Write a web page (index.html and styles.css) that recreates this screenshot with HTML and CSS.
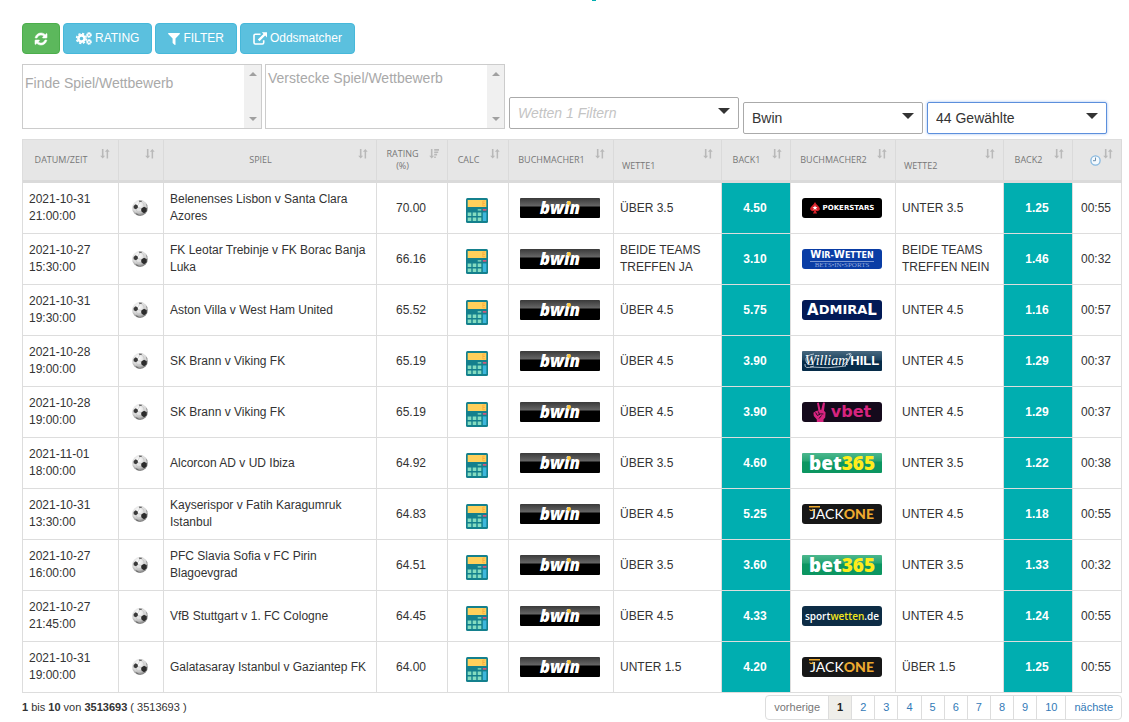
FILE: index.html
```html
<!DOCTYPE html>
<html lang="de">
<head>
<meta charset="utf-8">
<meta name="viewport" content="width=device-width, initial-scale=1">
<title>Oddsmatcher</title>
<link rel="stylesheet" href="styles.css">
</head>
<body>
<svg class="defs" aria-hidden="true">
  <defs>
    <radialGradient id="ballshade" cx="0.4" cy="0.3" r="0.75">
      <stop offset="0" stop-color="#ffffff"/><stop offset="0.6" stop-color="#d6d6d6"/><stop offset="1" stop-color="#6c6c6c"/>
    </radialGradient>
    <symbol id="ball" viewBox="0 0 16 16">
      <circle cx="8" cy="8" r="7.9" fill="url(#ballshade)"/>
      <path d="M1.600 6l2-1.800 2.200 1.200.1 2.300-2 1.500-2.200-1z" fill="#3a3a3a"/>
      <path d="M9.200 8.400l2.900-1.700 2.700 1.500-.1 3-2.600 2-2.800-1.700z" fill="#2c2c2c"/>
      <path d="M6.800.5l3.600.3-1 1.200-2 .1zM3.300 13l2.600.9 1.400 1.600-2.600-.8zM14.200 3.600l1.200 2.200-.8-.2z" fill="#6a6a6a"/>
      <path d="M5.900 7.600l3.700 1M5.800 5.600l2-3.500M12.200 7l-.6-3.400-2.200-1.600M4 9.100l1.400 3 4.100-.7" fill="none" stroke="#b5b5b5" stroke-width=".5"/>
    </symbol>
    <symbol id="calc" viewBox="0 0 22 25">
      <rect width="22" height="25" rx="1.500" fill="#14808d"/>
      <rect x="1.700" y="2" width="18.600" height="7" fill="#ffd05b"/>
      <path d="M19.200 3h-2.400v2.200h1.800M18.800 5.500h-2v2.300h2.400" fill="none" stroke="#f9ab3e" stroke-width=".8"/>
      <path d="M11.700 11h3.600v1.700h-3.600z" fill="#6fc7b3"/>
      <path d="M16.800 11h3.600v1.700h-3.600z" fill="#d4577e"/>
      <path d="M16.800 14.400h3.600v8.600h-3.600z" fill="#3db7dc"/>
      <path d="M1.700 14.400h3.600v3.600H1.700zM6.700 14.400h3.600v3.600H6.700zM11.700 14.400h3.600v3.600h-3.600zM1.700 19.400h3.600V23H1.700zM6.700 19.400h3.600V23H6.700zM11.700 19.400h3.600V23h-3.600z" fill="#84dcc0"/>
    </symbol>
    <symbol id="sort" viewBox="0 0 10 10">
      <path d="M1.900 0h1.600v6.800h1.600L2.700 9.600.2 6.800h1.700zM6.600 9.600h1.500V2.800h1.600L7.300 0 4.900 2.800h1.700z"/>
    </symbol>
    <symbol id="sorted" viewBox="0 0 10 10">
      <path d="M1.900 0h1.600v6.800h1.600L2.700 9.600.2 6.800h1.700zM5.200 0h4.800v1.700H5.200zM5.200 2.400h4v1.700h-4zM5.200 4.800h2.900v1.600H5.200zM5.200 7.400h1.600V9H5.200z"/>
    </symbol>
  </defs>
</svg>

<main class="page">
  <div class="mark" aria-hidden="true"></div>
  <div class="actions">
    <button type="button" class="btn btn-refresh" aria-label="Aktualisieren">
      <svg class="icon" viewBox="0 0 1536 1536" aria-hidden="true"><path fill="currentColor" stroke="currentColor" stroke-width="70" d="M1511 928q0 5-1 7-64 268-268 434.500T764 1536q-146 0-282.500-55T238 1324l-129 129q-19 19-45 19t-45-19-19-45V960q0-26 19-45t45-19h448q26 0 45 19t19 45-19 45l-137 137q71 66 161 102t187 36q134 0 250-65t186-179q11-17 53-117 8-23 30-23h192q13 0 22.500 9.500t9.500 22.500zm25-800v448q0 26-19 45t-45 19h-448q-26 0-45-19t-19-45 19-45l138-138Q969 256 768 256q-134 0-250 65T332 500q-11 17-53 117-8 23-30 23H50q-13 0-22.500-9.500T18 608v-7q65-268 270-434.500T768 0q146 0 284 55.500T1297 212l130-129q19-19 45-19t45 19 19 45z"/></svg>
    </button>
    <button type="button" class="btn">
      <svg class="icon icon-wide" viewBox="0 0 16 13" aria-hidden="true"><g fill="none" stroke="currentColor"><circle cx="5.500" cy="6.500" r="3.100" stroke-width="2.600"/><circle cx="5.500" cy="6.500" r="4.900" stroke-width="1.600" stroke-dasharray="2.200 1.650"/><circle cx="13" cy="3" r="1.500" stroke-width="1.300"/><circle cx="13" cy="3" r="2.500" stroke-width="1" stroke-dasharray="1.300 .66"/><circle cx="13" cy="10" r="1.500" stroke-width="1.300"/><circle cx="13" cy="10" r="2.500" stroke-width="1" stroke-dasharray="1.300 .66"/></g></svg>
      RATING
    </button>
    <button type="button" class="btn">
      <svg class="icon" viewBox="0 0 12 12" aria-hidden="true"><path fill="currentColor" d="M.6 0h10.800q.9.200.4 1L7.500 5.400v6q-.2.800-1 .4L4.600 9.900V5.400L.2 1Q-.2.200.6 0z"/></svg>
      FILTER
    </button>
    <button type="button" class="btn">
      <svg class="icon icon-mid" viewBox="0 0 14 13" aria-hidden="true"><path fill="none" stroke="currentColor" stroke-width="1.600" d="M7.500 2.300H2.300Q1 2.300 1 3.600v7Q1 12 2.300 12h7q1.400 0 1.400-1.400V8.200"/><path fill="currentColor" d="M8.800.2H14v5.200l-1.800-1.800-5.700 5.600-1.700-1.700L10.500 2z"/></svg>
      Oddsmatcher
    </button>
  </div>

  <div class="filters">
    <div class="area area-low">
      <textarea class="area-text" aria-label="Finde Spiel/Wettbewerb" placeholder="Finde Spiel/Wettbewerb"></textarea>
      <div class="scroll" aria-hidden="true"><span class="up"></span><span class="down"></span></div>
    </div>
    <div class="area">
      <textarea class="area-text" aria-label="Verstecke Spiel/Wettbewerb" placeholder="Verstecke Spiel/Wettbewerb"></textarea>
      <div class="scroll" aria-hidden="true"><span class="up"></span><span class="down"></span></div>
    </div>
    <div class="pick pick-bets"><select class="pick-box" aria-label="Wetten 1"><option>Wetten 1 Filtern</option></select></div>
    <div class="pick"><select class="pick-box" aria-label="Buchmacher 1"><option>Bwin</option></select></div>
    <div class="pick pick-active"><select class="pick-box" aria-label="Buchmacher 2"><option>44 Gewählte</option></select></div>
  </div>

  <table class="odds">
    <colgroup>
      <col class="w-date"><col class="w-sport"><col><col class="w-rating"><col class="w-calc"><col class="w-bookie"><col class="w-bet"><col class="w-back"><col class="w-bookie"><col class="w-bet"><col class="w-back"><col class="w-age">
    </colgroup>
    <thead>
      <tr>
        <th><div class="head"><span class="label">DATUM/ZEIT</span><svg class="sort"><use href="#sort"/></svg></div></th>
        <th><div class="head"><span class="label"></span><svg class="sort"><use href="#sort"/></svg></div></th>
        <th><div class="head"><span class="label">SPIEL</span><svg class="sort"><use href="#sort"/></svg></div></th>
        <th><div class="head"><span class="label">RATING (%)</span><svg class="sort"><use href="#sorted"/></svg></div></th>
        <th><div class="head"><span class="label">CALC</span><svg class="sort"><use href="#sort"/></svg></div></th>
        <th><div class="head"><span class="label">BUCHMACHER1</span><svg class="sort"><use href="#sort"/></svg></div></th>
        <th><div class="head head-bet"><span class="label">WETTE1</span><svg class="sort"><use href="#sort"/></svg></div></th>
        <th><div class="head"><span class="label">BACK1</span><svg class="sort"><use href="#sort"/></svg></div></th>
        <th><div class="head"><span class="label">BUCHMACHER2</span><svg class="sort"><use href="#sort"/></svg></div></th>
        <th><div class="head head-bet"><span class="label">WETTE2</span><svg class="sort"><use href="#sort"/></svg></div></th>
        <th><div class="head"><span class="label">BACK2</span><svg class="sort"><use href="#sort"/></svg></div></th>
        <th><div class="head head-age"><svg class="clock" viewBox="0 0 11 11"><circle cx="5.500" cy="5.500" r="4.600" fill="#f4f9fd" stroke="#86b8e0" stroke-width="1.300"/><path d="M5.500 2.500v3.200H3" fill="none" stroke="#5b7f9f" stroke-width=".9"/></svg><svg class="sort"><use href="#sort"/></svg></div></th>
      </tr>
    </thead>
    <tbody>
      <tr>
        <td>2021-10-31 21:00:00</td><td class="mid"><svg class="ball"><use href="#ball"/></svg></td><td>Belenenses Lisbon v Santa Clara Azores</td><td class="mid">70.00</td><td class="mid"><svg class="calc"><use href="#calc"/></svg></td><td class="mid"><span class="logo bwin">bwin</span></td><td>ÜBER 3.5</td><td class="back">4.50</td>
        <td class="mid"><span class="logo pokerstars"><svg class="spade" viewBox="0 0 10 12"><path d="M5 0q1 2.500 3.600 4.400Q10.500 6.200 9.500 8 8 9.900 5.800 8.700L7 11.600H3l1.200-2.900Q2 9.900.5 8-.5 6.200 1.400 4.400 4 2.500 5 0z" fill="#d8222a"/><path d="M5 3.200l.7 1.700 1.800.1-1.400 1.200.5 1.800L5 7l-1.600 1 .5-1.800L2.500 5l1.800-.1z" fill="#fff"/></svg>POKERSTARS</span></td>
        <td>UNTER 3.5</td><td class="back">1.25</td><td class="mid">00:55</td>
      </tr>
      <tr>
        <td>2021-10-27 15:30:00</td><td class="mid"><svg class="ball"><use href="#ball"/></svg></td><td>FK Leotar Trebinje v FK Borac Banja Luka</td><td class="mid">66.16</td><td class="mid"><svg class="calc"><use href="#calc"/></svg></td><td class="mid"><span class="logo bwin">bwin</span></td><td>BEIDE TEAMS TREFFEN JA</td><td class="back">3.10</td>
        <td class="mid"><span class="logo wirwetten"><span class="wir-top"><b>W</b>IR-<b>W</b>ETTEN</span><span class="wir-sub">BETS•IN•SPORTS</span></span></td>
        <td>BEIDE TEAMS TREFFEN NEIN</td><td class="back">1.46</td><td class="mid">00:32</td>
      </tr>
      <tr>
        <td>2021-10-31 19:30:00</td><td class="mid"><svg class="ball"><use href="#ball"/></svg></td><td>Aston Villa v West Ham United</td><td class="mid">65.52</td><td class="mid"><svg class="calc"><use href="#calc"/></svg></td><td class="mid"><span class="logo bwin">bwin</span></td><td>ÜBER 4.5</td><td class="back">5.75</td>
        <td class="mid"><span class="logo admiral"><b>A</b>DMIRA<b>L</b></span></td>
        <td>UNTER 4.5</td><td class="back">1.16</td><td class="mid">00:57</td>
      </tr>
      <tr>
        <td>2021-10-28 19:00:00</td><td class="mid"><svg class="ball"><use href="#ball"/></svg></td><td>SK Brann v Viking FK</td><td class="mid">65.19</td><td class="mid"><svg class="calc"><use href="#calc"/></svg></td><td class="mid"><span class="logo bwin">bwin</span></td><td>ÜBER 4.5</td><td class="back">3.90</td>
        <td class="mid"><span class="logo hill"><svg class="swash" viewBox="0 0 80 20"><path d="M12 3Q3 4 4 10q1 5 8 3M12 15Q2 19 3 13M44 4q6-3 5 0-3 7-9 11M47 3q4 1-4 12M8 16q18 2 36-1" fill="none" stroke="#d4dde4" stroke-width=".8"/></svg><i class="hill-script">William</i><b class="hill-block">HILL</b></span></td>
        <td>UNTER 4.5</td><td class="back">1.29</td><td class="mid">00:37</td>
      </tr>
      <tr>
        <td>2021-10-28 19:00:00</td><td class="mid"><svg class="ball"><use href="#ball"/></svg></td><td>SK Brann v Viking FK</td><td class="mid">65.19</td><td class="mid"><svg class="calc"><use href="#calc"/></svg></td><td class="mid"><span class="logo bwin">bwin</span></td><td>ÜBER 4.5</td><td class="back">3.90</td>
        <td class="mid"><span class="logo vbet"><svg class="hand" viewBox="0 0 14 20"><path d="M4 1l1.800-.4L7.500 8l.7.100L10 .5l2 .3-1 8 1.600 1.700-.4 5-1.700 2V20H3.800v-2.500L.8 14 .4 10.800 3 9l2.400-.5z" fill="#d6247f"/><path d="M2.600 10.500l1.800 3M5.400 9.500l1.200 3.200M4.400 13.500q3-2.500 6-1.500M8.500 13.500L6 16.500" fill="none" stroke="#150a1c" stroke-width=".9"/></svg>vbet</span></td>
        <td>UNTER 4.5</td><td class="back">1.29</td><td class="mid">00:37</td>
      </tr>
      <tr>
        <td>2021-11-01 18:00:00</td><td class="mid"><svg class="ball"><use href="#ball"/></svg></td><td>Alcorcon AD v UD Ibiza</td><td class="mid">64.92</td><td class="mid"><svg class="calc"><use href="#calc"/></svg></td><td class="mid"><span class="logo bwin">bwin</span></td><td>ÜBER 3.5</td><td class="back">4.60</td>
        <td class="mid"><span class="logo bet365">bet<span class="yellow">365</span></span></td>
        <td>UNTER 3.5</td><td class="back">1.22</td><td class="mid">00:38</td>
      </tr>
      <tr>
        <td>2021-10-31 13:30:00</td><td class="mid"><svg class="ball"><use href="#ball"/></svg></td><td>Kayserispor v Fatih Karagumruk Istanbul</td><td class="mid">64.83</td><td class="mid"><svg class="calc"><use href="#calc"/></svg></td><td class="mid"><span class="logo bwin">bwin</span></td><td>ÜBER 4.5</td><td class="back">5.25</td>
        <td class="mid"><span class="logo jackone"><svg class="crown" viewBox="0 0 11 6"><path d="M0 0h11v1.500H0zM0 3l2.500 1L4 2.500l.6 2.500H1z" fill="#eda92f"/></svg>JACK<b>ONE</b></span></td>
        <td>UNTER 4.5</td><td class="back">1.18</td><td class="mid">00:55</td>
      </tr>
      <tr>
        <td>2021-10-27 16:00:00</td><td class="mid"><svg class="ball"><use href="#ball"/></svg></td><td>PFC Slavia Sofia v FC Pirin Blagoevgrad</td><td class="mid">64.51</td><td class="mid"><svg class="calc"><use href="#calc"/></svg></td><td class="mid"><span class="logo bwin">bwin</span></td><td>ÜBER 3.5</td><td class="back">3.60</td>
        <td class="mid"><span class="logo bet365">bet<span class="yellow">365</span></span></td>
        <td>UNTER 3.5</td><td class="back">1.33</td><td class="mid">00:32</td>
      </tr>
      <tr>
        <td>2021-10-27 21:45:00</td><td class="mid"><svg class="ball"><use href="#ball"/></svg></td><td>VfB Stuttgart v 1. FC Cologne</td><td class="mid">64.45</td><td class="mid"><svg class="calc"><use href="#calc"/></svg></td><td class="mid"><span class="logo bwin">bwin</span></td><td>ÜBER 4.5</td><td class="back">4.33</td>
        <td class="mid"><span class="logo sportwetten">sport<span class="yellow">wetten</span>.de</span></td>
        <td>UNTER 4.5</td><td class="back">1.24</td><td class="mid">00:55</td>
      </tr>
      <tr>
        <td>2021-10-31 19:00:00</td><td class="mid"><svg class="ball"><use href="#ball"/></svg></td><td>Galatasaray Istanbul v Gaziantep FK</td><td class="mid">64.00</td><td class="mid"><svg class="calc"><use href="#calc"/></svg></td><td class="mid"><span class="logo bwin">bwin</span></td><td>UNTER 1.5</td><td class="back">4.20</td>
        <td class="mid"><span class="logo jackone"><svg class="crown" viewBox="0 0 11 6"><path d="M0 0h11v1.500H0zM0 3l2.500 1L4 2.500l.6 2.500H1z" fill="#eda92f"/></svg>JACK<b>ONE</b></span></td>
        <td>ÜBER 1.5</td><td class="back">1.25</td><td class="mid">00:55</td>
      </tr>
    </tbody>
  </table>

  <footer class="foot">
    <div class="count"><b>1</b> bis <b>10</b> von <b>3513693</b> ( 3513693 )</div>
    <nav class="pages" aria-label="Seiten">
      <span class="page-item off">vorherige</span><span class="page-item current" aria-current="page">1</span><a class="page-item" href="#2">2</a><a class="page-item" href="#3">3</a><a class="page-item" href="#4">4</a><a class="page-item" href="#5">5</a><a class="page-item" href="#6">6</a><a class="page-item" href="#7">7</a><a class="page-item" href="#8">8</a><a class="page-item" href="#9">9</a><a class="page-item" href="#10">10</a><a class="page-item" href="#2">nächste</a>
    </nav>
  </footer>
</main>
</body>
</html>
```
FILE: styles.css
```css
* { box-sizing: border-box; }
body {
  margin: 0;
  background: #fff;
  color: #333;
  font: 12px/17px "Liberation Sans", Arial, sans-serif;
}
.defs { position: absolute; width: 0; height: 0; }
.page { padding: 0 7px 0 22px; }
.mark { width: 4px; height: 1px; margin: 0 0 22px calc(50% + 20px); background: #00aeb0; }

.actions { display: flex; gap: 3px; }
.btn {
  display: flex;
  align-items: center;
  gap: 3px;
  height: 31px;
  padding: 0 12px;
  border: 1px solid #46b8da;
  border-radius: 4px;
  background: #5bc0de;
  color: #fff;
  font: 12px/17px "Liberation Sans", Arial, sans-serif;
}
.btn-refresh { background: #5cb85c; border-color: #4cae4c; }
.icon { width: 12px; height: 12px; overflow: visible; }
.icon-mid { width: 14px; height: 13px; }
.icon-wide { width: 16px; height: 13px; }

.filters { display: flex; align-items: flex-end; gap: 4px; margin: 10px 0 5px; }
.area {
  display: flex;
  width: 240px;
  height: 65px;
  margin: 0 -1px 5px 0;
  border: 1px solid #ccc;
}
.area-text {
  flex: 1;
  min-width: 0;
  padding: 5px 2px;
  border: 0;
  outline: 0;
  resize: none;
  overflow: hidden;
  color: #333;
  font: 14px/16px "Liberation Sans", Arial, sans-serif;
}
.area-low .area-text { padding-top: 10px; }
.area-text::placeholder { color: #a9a9a9; }
.scroll {
  display: flex;
  flex-direction: column;
  justify-content: space-between;
  align-items: center;
  width: 17px;
  padding: 7px 0;
  background: #f0f0f0;
}
.up, .down { border: 4px solid transparent; }
.up { border-top: 0; border-bottom-color: #a0a0a0; }
.down { border-bottom: 0; border-top-color: #a0a0a0; }

.pick { position: relative; width: 180px; }
.pick-bets { width: 230px; margin: 0 0 5px 1px; }
.pick::after {
  content: "";
  position: absolute;
  top: 11px;
  right: 9px;
  border: 6px solid transparent;
  border-bottom: 0;
  border-top-color: #333;
  pointer-events: none;
}
.pick-box {
  display: block;
  width: 100%;
  height: 32px;
  padding: 0 8px;
  appearance: none;
  border: 1px solid #aaa;
  border-radius: 2px;
  background: #fff;
  color: #333;
  font: 14px/20px "Liberation Sans", Arial, sans-serif;
}
.pick-bets .pick-box { color: #c4c4c4; font-style: italic; }
.pick-active .pick-box { border-color: #5c8fdc; box-shadow: 0 0 3px #9dbdf0; }

.odds {
  width: 100%;
  table-layout: fixed;
  border-collapse: separate;
  border-spacing: 0;
  border-top: 1px solid #ddd;
  border-left: 1px solid #ddd;
}
.w-date { width: 96px; }
.w-sport { width: 45px; }
.w-rating { width: 71px; }
.w-calc { width: 61px; }
.w-bookie { width: 105px; }
.w-bet { width: 108px; }
.w-back { width: 69px; }
.w-age { width: 49px; }
th {
  height: 43px;
  padding: 0;
  border-right: 1px solid #dadada;
  border-bottom: 3px solid #dadada;
  background: #e6e6e6;
  color: #777;
  font: 9px/12px "Open Sans", sans-serif;
}
.head { display: flex; align-items: center; height: 40px; padding: 0 8px; }
.label { flex: 1; min-width: 0; text-align: center; }
.sort { flex: none; width: 10px; height: 10px; margin: 0 0 13px 9px; fill: #b9b9b9; }
.head-bet .label { padding-top: 12px; text-align: left; }
.head-age { justify-content: flex-end; gap: 2px; }
.head-age .sort { margin-left: 0; }
.clock { width: 11px; height: 11px; margin-top: 1px; }
td {
  height: 51px;
  padding: 0 6px;
  border-right: 1px solid #ddd;
  border-bottom: 1px solid #ddd;
}
.mid { padding: 0 2px 0 0; text-align: center; }
.back { padding: 0 2px 0 0; background: #00aeb0; color: #fff; font-weight: bold; text-align: center; }
.ball { display: block; width: 16px; height: 16px; margin: 0 auto; }
.calc { display: block; width: 22px; height: 25px; margin: 4px auto 0; }

.logo {
  position: relative;
  display: flex;
  align-items: center;
  justify-content: center;
  width: 80px;
  height: 20px;
  margin: 0 auto;
  border-radius: 3px;
  color: #fff;
  white-space: nowrap;
}
.bwin {
  background: linear-gradient(#3a3a3a, #666 8px, #000 9px);
  font: italic 800 17px/20px "Open Sans", sans-serif;
  border-radius: 1px;
}
.bwin::after {
  content: "";
  position: absolute;
  top: 3px;
  left: 47px;
  width: 4px;
  height: 4px;
  border-radius: 2px;
  background: #fdc73a;
}
.pokerstars { gap: 3px; background: #000; font: bold 7px/20px "DejaVu Sans", sans-serif; }
.spade { width: 10px; height: 12px; }
.wirwetten { flex-direction: column; background: #0a3da5; }
.wir-top { border-bottom: 1px solid #7c98d2; font: bold 8px/10px "DejaVu Sans", sans-serif; }
.wir-top b { font-size: 10px; }
.wir-sub { color: #8fa7dc; font: 7px/7px "Liberation Serif", serif; }
.admiral { background: #021a56; font: bold 13px/20px "DejaVu Sans", sans-serif; }
.admiral b { font-size: 15px; }
.hill { gap: 2px; border-radius: 1px; background: linear-gradient(#47687f, #1d4460 9px, #062c49 10px); }
.swash { position: absolute; inset: 0; }
.hill-script { font: italic 14px/20px "Liberation Serif", serif; }
.hill-block { font: bold 13px/20px "Liberation Sans", sans-serif; }
.vbet { gap: 4px; background: #150a1c; color: #d6247f; font: bold 16px/16px "DejaVu Sans", sans-serif; }
.hand { width: 14px; height: 20px; }
.bet365 { border-radius: 1px; background: linear-gradient(#4bb78d, #27a574 8px, #0c9661 9px); font: 800 19px/20px "Open Sans", sans-serif; }
.bet365 .yellow { color: #ffec1c; }
.jackone { background: #171717; font: 14px/20px Lato, sans-serif; }
.jackone b { color: #eda92f; font-weight: 900; }
.crown { position: absolute; top: 2px; left: 7px; width: 11px; height: 6px; }
.sportwetten { background: #0d2c45; font: 600 10px/20px "Open Sans", sans-serif; }
.sportwetten .yellow { color: #f3e61c; }

.foot { display: flex; justify-content: space-between; align-items: center; margin-top: 2px; font-size: 11px; line-height: 15px; }
.pages { display: flex; border: 1px solid #ddd; border-radius: 4px; overflow: hidden; }
.page-item { padding: 4px 8px; border-left: 1px solid #ddd; color: #337ab7; text-decoration: none; }
.page-item:first-child { border-left: 0; }
.off { color: #777; }
.current { background: #efeeea; color: #222; font-weight: bold; }
```
